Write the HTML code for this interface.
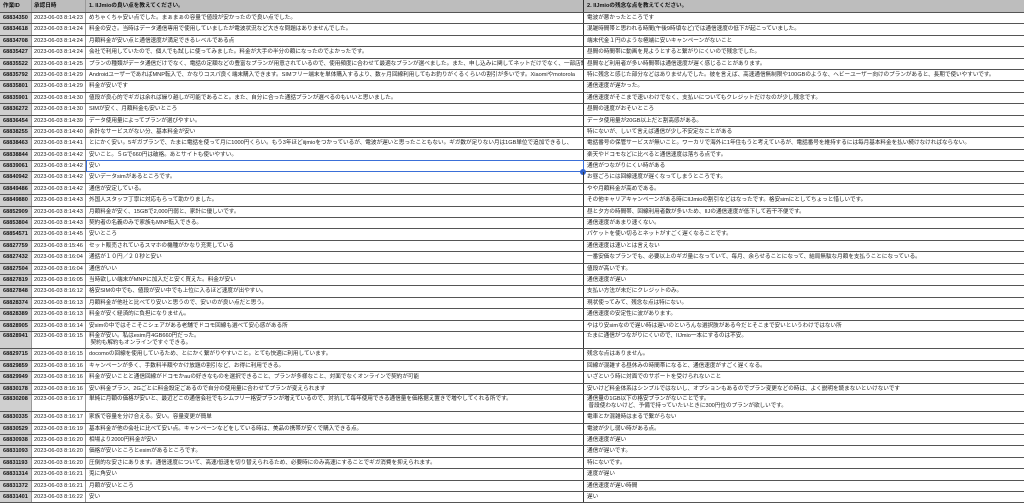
<!DOCTYPE html>
<html><head><meta charset="utf-8"><style>
*{margin:0;padding:0;box-sizing:border-box}
body{width:1024px;height:495px;overflow:hidden;background:#fff;font-family:"Liberation Sans","Noto Sans CJK JP",sans-serif;font-size:5.6px;color:#222}
.r{display:flex;height:11.4px;border-bottom:1px solid #555;position:relative}
.r.d{height:17.4px}
.r>div{overflow:hidden;white-space:pre;padding-left:3px;line-height:10px;border-right:1px solid #999}
.c0{width:32px;background:#cfcfcf;font-weight:bold;color:#111}
.c1{width:54px;padding-left:2px!important}
.c2{width:498px;border-right:1.5px solid #333!important}
.c3{flex:1;border-right:none!important}
.h{height:13px;background:#bdbdbd;font-weight:bold;color:#111}
.h>div{line-height:12px;background:#bdbdbd}
.d>div{line-height:6.5px;padding-top:1.5px}
.sel{position:absolute;left:86px;top:-1px;width:498px;height:12.4px;border:1.5px solid #3a6fd8}
.dot{position:absolute;left:580px;top:8px;width:6px;height:6px;border-radius:3px;background:#2f62d0}
</style></head><body>
<div class="r h"><div class="c0">作業ID</div><div class="c1">承認日時</div><div class="c2">1. IIJmioの良い点を教えてください。</div><div class="c3">2. IIJmioの残念な点を教えてください。</div></div>
<div class="r"><div class="c0">68834350</div><div class="c1">2023-06-03 8:14:23</div><div class="c2">めちゃくちゃ安い点でした。まぁまぁの容量で値段が安かったので良い点でした。</div><div class="c3">電波が悪かったところです</div></div>
<div class="r"><div class="c0">68834618</div><div class="c1">2023-06-03 8:14:24</div><div class="c2">料金の安さ。当時はデータ通信専用で使用していましたが電波状況など大きな問題はありませんでした。</div><div class="c3">混雑時間帯と思われる時間(午後9時頃など)では通信速度の低下が起こっていました。</div></div>
<div class="r"><div class="c0">68834708</div><div class="c1">2023-06-03 8:14:24</div><div class="c2">月額料金が安い点と通信速度が満足できるレベルである点</div><div class="c3">端末代金１円のような極端に安いキャンペーンがないこと</div></div>
<div class="r"><div class="c0">68835427</div><div class="c1">2023-06-03 8:14:24</div><div class="c2">会社で利用していたので、個人でも試しに使ってみました。料金が大手の半分の額になったのでよかったです。</div><div class="c3">昼間の時間帯に動画を見ようとすると繋がりにくいので残念でした。</div></div>
<div class="r"><div class="c0">68835522</div><div class="c1">2023-06-03 8:14:25</div><div class="c2">プランの種類がデータ通信だけでなく、電話の定額などの豊富なプランが用意されているので、使用頻度に合わせて最適なプランが選べました。また、申し込みに関してネットだけでなく、一部店舗でも可能</div><div class="c3">昼間など利用者が多い時間帯は通信速度が遅く感じることがあります。</div></div>
<div class="r"><div class="c0">68835792</div><div class="c1">2023-06-03 8:14:29</div><div class="c2">AndroidユーザーであればMNP転入で、かなりコスパ良く端末購入できます。SIMフリー端末を単体購入するより、数ヶ月回線利用してもお釣りがくるくらいの割引が多いです。Xiaomiやmotorola</div><div class="c3">特に残念と感じた部分などはありませんでした。彼を言えば、高速通信無制限や100GBのような、ヘビーユーザー向けのプランがあると、長期で使いやすいです。</div></div>
<div class="r"><div class="c0">68835801</div><div class="c1">2023-06-03 8:14:29</div><div class="c2">料金が安いです</div><div class="c3">通信速度が遅かった。</div></div>
<div class="r"><div class="c0">68835901</div><div class="c1">2023-06-03 8:14:30</div><div class="c2">値段が良心的でギガは余れば繰り越しが可能であること。また、自分に合った通話プランが選べるのもいいと思いました。</div><div class="c3">通信速度がそこまで速いわけでなく、支払いについてもクレジットだけなのが少し残念です。</div></div>
<div class="r"><div class="c0">68836272</div><div class="c1">2023-06-03 8:14:30</div><div class="c2">SIMが安く、月額料金も安いところ</div><div class="c3">昼間の速度がおそいところ</div></div>
<div class="r"><div class="c0">68836454</div><div class="c1">2023-06-03 8:14:39</div><div class="c2">データ使用量によってプランが選びやすい。</div><div class="c3">データ使用量が20GB以上だと割高感がある。</div></div>
<div class="r"><div class="c0">68838255</div><div class="c1">2023-06-03 8:14:40</div><div class="c2">余計なサービスがない分、基本料金が安い</div><div class="c3">特にないが、しいて言えば通信が少し不安定なことがある</div></div>
<div class="r"><div class="c0">68838463</div><div class="c1">2023-06-03 8:14:41</div><div class="c2">とにかく安い。5ギガプランで、たまに電話を使って月に1000円くらい。もう3年ほどiijmioをつかっているが、電波が遅いと思ったこともない。ギガ数が足りない月は1GB単位で追加できるし、</div><div class="c3">電話番号の保管サービスが無いこと。ワーカリで海外に1年住もうと考えているが、電話番号を維持するには毎月基本料金を払い続けなければならない。</div></div>
<div class="r"><div class="c0">68838844</div><div class="c1">2023-06-03 8:14:42</div><div class="c2">安いこと。５Gで660円は破格。あとサイトも使いやすい。</div><div class="c3">楽天やドコモなどに比べると通信速度は落ちる点です。</div></div>
<div class="r"><div class="c0">68839061</div><div class="c1">2023-06-03 8:14:42</div><div class="c2">安い</div><div class="c3">通信がつながりにくい時がある</div><span class="sel"></span><span class="dot"></span></div>
<div class="r"><div class="c0">68840942</div><div class="c1">2023-06-03 8:14:42</div><div class="c2">安いデータsimがあるところです。</div><div class="c3">お昼ごろには回線速度が遅くなってしまうところです。</div></div>
<div class="r"><div class="c0">68849486</div><div class="c1">2023-06-03 8:14:42</div><div class="c2">通信が安定している。</div><div class="c3">やや月額料金が高めである。</div></div>
<div class="r"><div class="c0">68849880</div><div class="c1">2023-06-03 8:14:43</div><div class="c2">外国人スタッフ丁寧に対応もらって助かりました。</div><div class="c3">その他キャリアキャンペーンがある時にIIJmioの割引などはなったです。格安simにとしてちょっと惜しいです。</div></div>
<div class="r"><div class="c0">68852909</div><div class="c1">2023-06-03 8:14:43</div><div class="c2">月額料金が安く、15GBで2,000円弱と、家計に優しいです。</div><div class="c3">昼と夕方の時間帯、回線利用者数が多いため、IIJの通信速度が低下して若干不便です。</div></div>
<div class="r"><div class="c0">68853804</div><div class="c1">2023-06-03 8:14:43</div><div class="c2">契約者の名義のみで家族もMNP転入できる。</div><div class="c3">通信速度があまり速くない。</div></div>
<div class="r"><div class="c0">68854571</div><div class="c1">2023-06-03 8:14:45</div><div class="c2">安いところ</div><div class="c3">パケットを使い切るとネットがすごく遅くなることです。</div></div>
<div class="r"><div class="c0">68827759</div><div class="c1">2023-06-03 8:15:46</div><div class="c2">セット販売されているスマホの機種がかなり充実している</div><div class="c3">通信速度は速いとは言えない</div></div>
<div class="r"><div class="c0">68827432</div><div class="c1">2023-06-03 8:16:04</div><div class="c2">通話が１０円／２０秒と安い</div><div class="c3">一番安価なプランでも、必要以上のギガ量になっていて、毎月、余らせることになって、結局無駄な月額を支払うことになっている。</div></div>
<div class="r"><div class="c0">68827504</div><div class="c1">2023-06-03 8:16:04</div><div class="c2">通信がいい</div><div class="c3">値段が高いです。</div></div>
<div class="r"><div class="c0">68827819</div><div class="c1">2023-06-03 8:16:05</div><div class="c2">当時欲しい端末がMNPに加入だと安く買えた。料金が安い</div><div class="c3">通信速度が遅い</div></div>
<div class="r"><div class="c0">68827848</div><div class="c1">2023-06-03 8:16:12</div><div class="c2">格安SIMの中でも、値段が安い中でも上位に入るほど速度が出やすい。</div><div class="c3">支払い方法が未だにクレジットのみ。</div></div>
<div class="r"><div class="c0">68828374</div><div class="c1">2023-06-03 8:16:13</div><div class="c2">月額料金が他社と比べてり安いと思うので、安いのが良い点だと思う。</div><div class="c3">現状使ってみて、残念な点は特にない。</div></div>
<div class="r"><div class="c0">68828389</div><div class="c1">2023-06-03 8:16:13</div><div class="c2">料金が安く経済的に負担になりません。</div><div class="c3">通信速度の安定性に波があります。</div></div>
<div class="r"><div class="c0">68828905</div><div class="c1">2023-06-03 8:16:14</div><div class="c2">安simの中ではそこそこシェアがある老舗でドコモ回線も選べて安心感がある所</div><div class="c3">やはり安simなので遅い時は遅いのといろんな選択肢がある今だとそこまで安いというわけではない所</div></div>
<div class="r d"><div class="c0">68828941</div><div class="c1">2023-06-03 8:16:15</div><div class="c2">料金が安い。私はesim月4GB660円だった。
 契約も解約もオンラインですぐできる。</div><div class="c3">たまに通信がつながりにくいので、IIJmio一本にするのは不安。</div></div>
<div class="r"><div class="c0">68829715</div><div class="c1">2023-06-03 8:16:15</div><div class="c2">docomoの回線を使用しているため、とにかく繋がりやすいこと。とても快適に利用しています。</div><div class="c3">残念な点はありません。</div></div>
<div class="r"><div class="c0">68829859</div><div class="c1">2023-06-03 8:16:16</div><div class="c2">キャンペーンが多く、手数料半額やかけ放題の割引など、お得に利用できる。</div><div class="c3">回線が混雑する昼休みの時間帯になると、通信速度がすごく遅くなる。</div></div>
<div class="r"><div class="c0">68829949</div><div class="c1">2023-06-03 8:16:16</div><div class="c2">料金が安いことと通信回線がドコモかauの好きなものを選択できること、プランが多様なこと、対面でなくオンラインで契約が可能</div><div class="c3">いざという時に対面でのサポートを受けられないこと</div></div>
<div class="r"><div class="c0">68830178</div><div class="c1">2023-06-03 8:16:16</div><div class="c2">安い料金プラン、2Gごとに料金設定ごあるので自分の使用量に合わせてプランが変えられます</div><div class="c3">安いけど料金体系はシンプルではないし、オプションもあるのでプラン変更などの時は、よく説明を読まないといけないです</div></div>
<div class="r d"><div class="c0">68830208</div><div class="c1">2023-06-03 8:16:17</div><div class="c2">単純に月額の価格が安いと、最近どこの通信会社でもシムフリー格安プランが増えているので、対抗して毎年使用できる通信量を価格据え置きで増やしてくれる所です。</div><div class="c3">通信量の1GB以下の格安プランがないことです。
 普段使わないけど、予備で持っていたいときに300円位のプランが欲しいです。</div></div>
<div class="r"><div class="c0">68830335</div><div class="c1">2023-06-03 8:16:17</div><div class="c2">家族で容量を分け合える。安い。容量変更が簡単</div><div class="c3">電車とか混雑時はまるで繋がらない</div></div>
<div class="r"><div class="c0">68830529</div><div class="c1">2023-06-03 8:16:19</div><div class="c2">基本料金が他の会社に比べて安い点。キャンペーンなどをしている時は、美品の携帯が安くで購入できる点。</div><div class="c3">電波が少し弱い時がある点。</div></div>
<div class="r"><div class="c0">68830938</div><div class="c1">2023-06-03 8:16:20</div><div class="c2">相場より2000円料金が安い</div><div class="c3">通信速度が遅い</div></div>
<div class="r"><div class="c0">68831093</div><div class="c1">2023-06-03 8:16:20</div><div class="c2">価格が安いところとesimがあるところです。</div><div class="c3">通信が遅いです。</div></div>
<div class="r"><div class="c0">68831193</div><div class="c1">2023-06-03 8:16:20</div><div class="c2">圧倒的な安さにあります。通信速度について、高速/低速を切り替えられるため、必要時にのみ高速にすることでギガ消費を抑えられます。</div><div class="c3">特にないです。</div></div>
<div class="r"><div class="c0">68831314</div><div class="c1">2023-06-03 8:16:21</div><div class="c2">兎に角安い</div><div class="c3">速度が遅い</div></div>
<div class="r"><div class="c0">68831372</div><div class="c1">2023-06-03 8:16:21</div><div class="c2">月額が安いところ</div><div class="c3">通信速度が遅い時間</div></div>
<div class="r"><div class="c0">68831401</div><div class="c1">2023-06-03 8:16:22</div><div class="c2">安い</div><div class="c3">遅い</div></div>
</body></html>
